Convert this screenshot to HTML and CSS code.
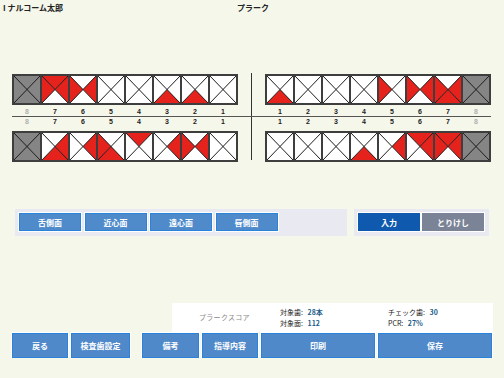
FILE: index.html
```html
<!DOCTYPE html>
<html lang="ja">
<head>
    <meta charset="UTF-8">
    <meta name="viewport" content="width=device-width, initial-scale=1.0">
    <title>プラーク</title>
    <link rel="stylesheet" href="styles.css">
</head>
<body>

    <div class="topbar">
        <span class="patient">I ナルコーム太郎</span>
        <span class="title">プラーク</span>
    </div>

    <!-- 歯式チャート -->
    <div class="chart">
        <div class="teeth upper-left" data-teeth="g,tlr,lr,,,b,b,"></div>
        <div class="divider"></div>
        <div class="teeth upper-right" data-teeth="b,,,,l,lr,lrb,g"></div>

        <div class="nums"><span class="off">8</span><span>7</span><span>6</span><span>5</span><span>4</span><span>3</span><span>2</span><span>1</span></div>
        <div class="nums nums-right"><span>1</span><span>2</span><span>3</span><span>4</span><span>5</span><span>6</span><span>7</span><span class="off">8</span></div>

        <div class="midline"></div>

        <div class="nums nums-low"><span class="off">8</span><span>7</span><span>6</span><span>5</span><span>4</span><span>3</span><span>2</span><span>1</span></div>
        <div class="nums nums-low nums-right"><span>1</span><span>2</span><span>3</span><span>4</span><span>5</span><span>6</span><span>7</span><span class="off">8</span></div>

        <div class="teeth lower-left" data-teeth="g,rb,r,lb,t,r,lr,"></div>
        <div class="teeth lower-right" data-teeth=",,,b,r,tr,tlr,g"></div>
    </div>

    <!-- 面選択 -->
    <div class="toolbar">
        <div class="panel faces">
            <button class="btn">舌側面</button>
            <button class="btn">近心面</button>
            <button class="btn">遠心面</button>
            <button class="btn">唇側面</button>
        </div>
        <div class="panel actions">
            <button class="btn btn-dark">入力</button>
            <button class="btn btn-gray">とりけし</button>
        </div>
    </div>

    <!-- スコア -->
    <div class="score">
        <div class="score-title">プラークスコア</div>
        <div class="score-col col-a">
            <div>対象歯: <span class="val">28本</span></div>
            <div>対象面: <span class="val">112</span></div>
        </div>
        <div class="score-col">
            <div>チェック歯: <span class="val">30</span></div>
            <div>PCR: <span class="val">27%</span></div>
        </div>
    </div>

    <div class="footer">
        <button class="btn fbtn w56">戻る</button>
        <button class="btn fbtn w59">検査歯設定</button>
        <button class="btn fbtn w57 gap">備考</button>
        <button class="btn fbtn w56">指導内容</button>
        <button class="btn fbtn w114">印刷</button>
        <button class="btn fbtn w114">保存</button>
    </div>

    <script>
        // 歯ごとの三角形 (t:上 r:右 b:下 l:左, g:欠損)
        var tri = {
            t: '0,0 28,0 14,14.5',
            r: '28,0 28,29 14,14.5',
            b: '0,29 28,29 14,14.5',
            l: '0,0 0,29 14,14.5'
        };

        function toothSvg(code) {
            var s = '<svg width="28" height="29" viewBox="0 0 28 29">';
            if (code == 'g') {
                s += '<rect width="28" height="29" fill="#858585"/>';
            } else {
                for (var k in tri) {
                    var fill = code.indexOf(k) >= 0 ? '#e5221c' : '#ffffff';
                    s += '<polygon points="' + tri[k] + '" fill="' + fill + '"/>';
                }
            }
            s += '<line x1="0" y1="0" x2="28" y2="29" stroke="#1c1c1c" stroke-width="1"/>';
            s += '<line x1="28" y1="0" x2="0" y2="29" stroke="#1c1c1c" stroke-width="1"/>';
            s += '<rect x="0.5" y="0.5" width="27" height="28" fill="none" stroke="#3e3e3e" stroke-width="1"/>';
            return s + '</svg>';
        }

        var rows = document.querySelectorAll('.teeth');
        for (var i = 0; i < rows.length; i++) {
            var codes = rows[i].getAttribute('data-teeth').split(',');
            var html = '';
            for (var j = 0; j < codes.length; j++) {
                html += toothSvg(codes[j]);
            }
            rows[i].innerHTML = html;
        }
    </script>
</body>
</html>
```

FILE: styles.css
```css
body {
    font-family: 'Noto Sans CJK JP', 'Liberation Sans', sans-serif;
    background-color: #f5f7eb;
    margin: 0;
    padding: 0;
    color: #222;
}

.topbar {
    display: flex;
    height: 16px;
    line-height: 16px;
    padding-left: 3px;
    font-size: 8px;
    font-weight: bold;
}

.patient {
    width: 234px;
}

/* 歯式 */
.chart {
    display: grid;
    grid-template-columns: 226px 27px 226px;
    grid-template-rows: 29px 13px 1px 10px 29px;
    margin: 58px 0 0 12px;
}

.teeth {
    display: flex;
    border: 1px solid #3e3e3e;
    height: 29px;
}

.teeth svg {
    display: block;
}

.upper-left { grid-column: 1; grid-row: 1; }
.upper-right { grid-column: 3; grid-row: 1; }
.lower-left { grid-column: 1; grid-row: 5; margin-top: 4px; }
.lower-right { grid-column: 3; grid-row: 5; margin-top: 4px; }

.divider {
    grid-column: 2;
    grid-row: 1 / 6;
    justify-self: center;
    width: 1px;
    background-color: #333;
    margin: -1px 0 -4px;
}

.nums {
    grid-column: 1;
    grid-row: 2;
    display: grid;
    grid-template-columns: repeat(8, 28px);
    padding: 5px 1px 0;
    font-family: 'Liberation Sans', sans-serif;
    font-size: 7px;
    font-weight: bold;
    line-height: 8px;
    text-align: center;
}

.nums-right {
    grid-column: 3;
}

.nums-low {
    grid-row: 4;
    padding-top: 1px;
}

.nums .off {
    color: #b0b0b0;
}

.midline {
    grid-column: 1 / 4;
    grid-row: 3;
    background-color: #555;
}

/* ボタン */
.btn {
    font-family: 'Noto Sans CJK JP', sans-serif;
    font-size: 8px;
    font-weight: bold;
    color: #ffffff;
    background-color: #4f8bcb;
    border: 1px solid #2a83d8;
    box-shadow: 0 0 0 1px #ffffff;
    padding: 0;
    cursor: pointer;
}

.toolbar {
    display: flex;
    margin: 53px 0 0 15px;
}

.panel {
    display: flex;
    gap: 3.5px;
    height: 27px;
    padding: 4px;
    box-sizing: border-box;
    background-color: #e9e9f1;
}

.panel .btn {
    width: 62px;
    height: 18px;
}

.faces {
    width: 332px;
}

.actions {
    width: 135px;
    margin-left: 7px;
    gap: 2px;
}

.btn-dark {
    background-color: #0f5aae;
    border-color: #0f5aae;
}

.btn-gray {
    background-color: #7b8496;
    border-color: #7b8496;
}

/* プラークスコア */
.score {
    display: flex;
    align-items: center;
    width: 321px;
    height: 29px;
    margin: 67px 0 0 172px;
    background-color: #ffffff;
    font-size: 7px;
    line-height: 11px;
    white-space: nowrap;
}

.score-title {
    width: 108px;
    padding-left: 27px;
    box-sizing: border-box;
    color: #888;
    font-size: 7px;
    letter-spacing: 0.3px;
}

.col-a {
    width: 108px;
}

.val {
    color: #1d5c88;
    font-weight: bold;
    margin-left: 3px;
}

.footer {
    display: flex;
    gap: 3px;
    margin: 1px 0 0 12px;
}

.fbtn {
    height: 25px;
    background-color: #5089c9;
}

.w56 { width: 56px; }
.w57 { width: 57px; }
.w59 { width: 59px; }
.w114 { width: 114px; }

.gap {
    margin-left: 9px;
}
```
